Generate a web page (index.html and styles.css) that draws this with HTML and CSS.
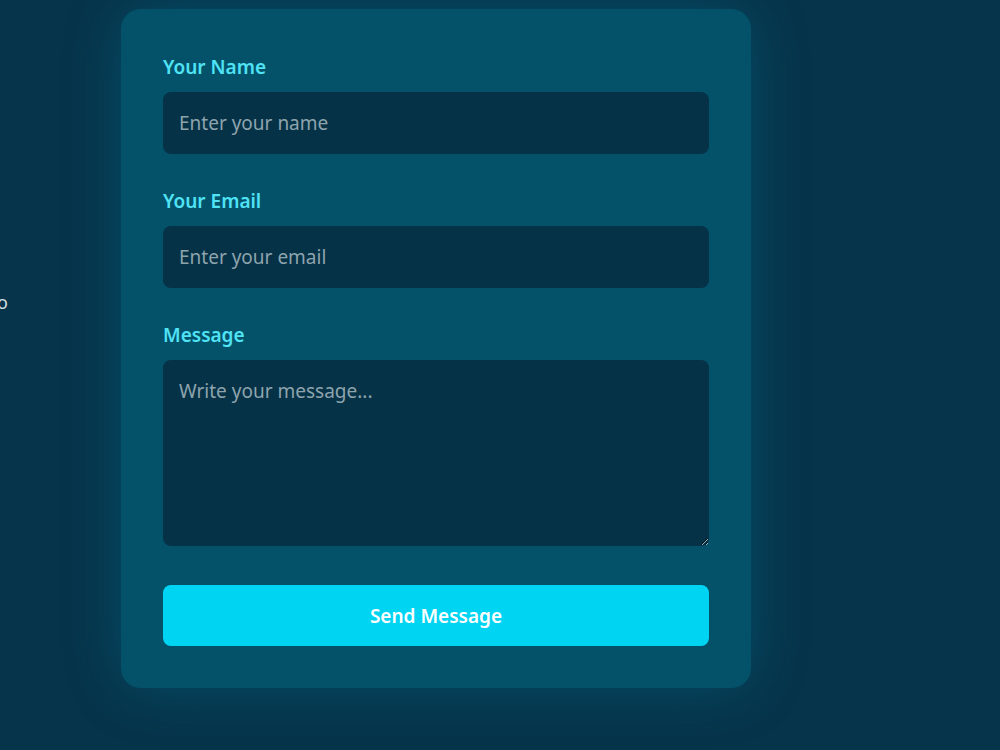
FILE: index.html
```html
<!DOCTYPE html>
<html lang="en">
<head>
    <meta charset="UTF-8">
    <meta name="viewport" content="width=device-width, initial-scale=1.0">
    <title>Contact</title>
    <link rel="stylesheet" href="styles.css">
</head>
<body>
    <div class="page">
        <div class="intro">
            <p>We would love to hear from you — drop us a line and say hello</p>
        </div>
        <form class="contact-card">
            <div class="field">
                <label for="name">Your Name</label>
                <input type="text" id="name" placeholder="Enter your name">
            </div>
            <div class="field">
                <label for="email">Your Email</label>
                <input type="email" id="email" placeholder="Enter your email">
            </div>
            <div class="field">
                <label for="message">Message</label>
                <textarea id="message" placeholder="Write your message..."></textarea>
            </div>
            <button type="submit" class="send-btn">Send Message</button>
        </form>
    </div>
</body>
</html>
```

FILE: styles.css
```css
body {
    font-family: "Noto Sans", "Open Sans", sans-serif;
    background-color: #06344a;
    margin: 0;
    height: 100vh;
    overflow: hidden;
}

.page {
    display: flex;
    align-items: flex-start;
    margin-left: -560px;
}

.intro {
    width: 568px;
    margin-top: 288px;
    flex-shrink: 0;
}

.intro p {
    margin: 0;
    color: #d2dde2;
    font-size: 18px;
    line-height: 28px;
    text-align: right;
    white-space: nowrap;
}

.contact-card {
    width: 546px;
    margin-left: 113px;
    margin-top: 9px;
    padding: 43px 42px 42px;
    background-color: #04526a;
    border-radius: 20px;
    box-shadow: 0 0 60px rgba(0, 170, 210, 0.22);
}

.field {
    display: flex;
    flex-direction: column;
    margin-bottom: 32px;
}

.field label {
    color: #4fe3f5;
    font-size: 19px;
    font-weight: 600;
    line-height: 30px;
    margin-bottom: 10px;
}

.field input,
.field textarea {
    font-family: inherit;
    font-size: 19px;
    line-height: 30px;
    padding: 16px;
    border: none;
    border-radius: 8px;
    background-color: #053247;
    color: #e0eef2;
    outline: none;
}

.field textarea {
    height: 154px;
    padding-top: 16px;
    box-sizing: content-box;
    resize: vertical;
}

.field input::placeholder,
.field textarea::placeholder {
    color: #8ea4ad;
}

.send-btn {
    display: block;
    width: 100%;
    height: 61px;
    margin-top: 39px;
    font-family: inherit;
    font-size: 19px;
    font-weight: 600;
    color: #ffffff;
    background-color: #00d4f3;
    border: none;
    border-radius: 8px;
    cursor: pointer;
}
```
